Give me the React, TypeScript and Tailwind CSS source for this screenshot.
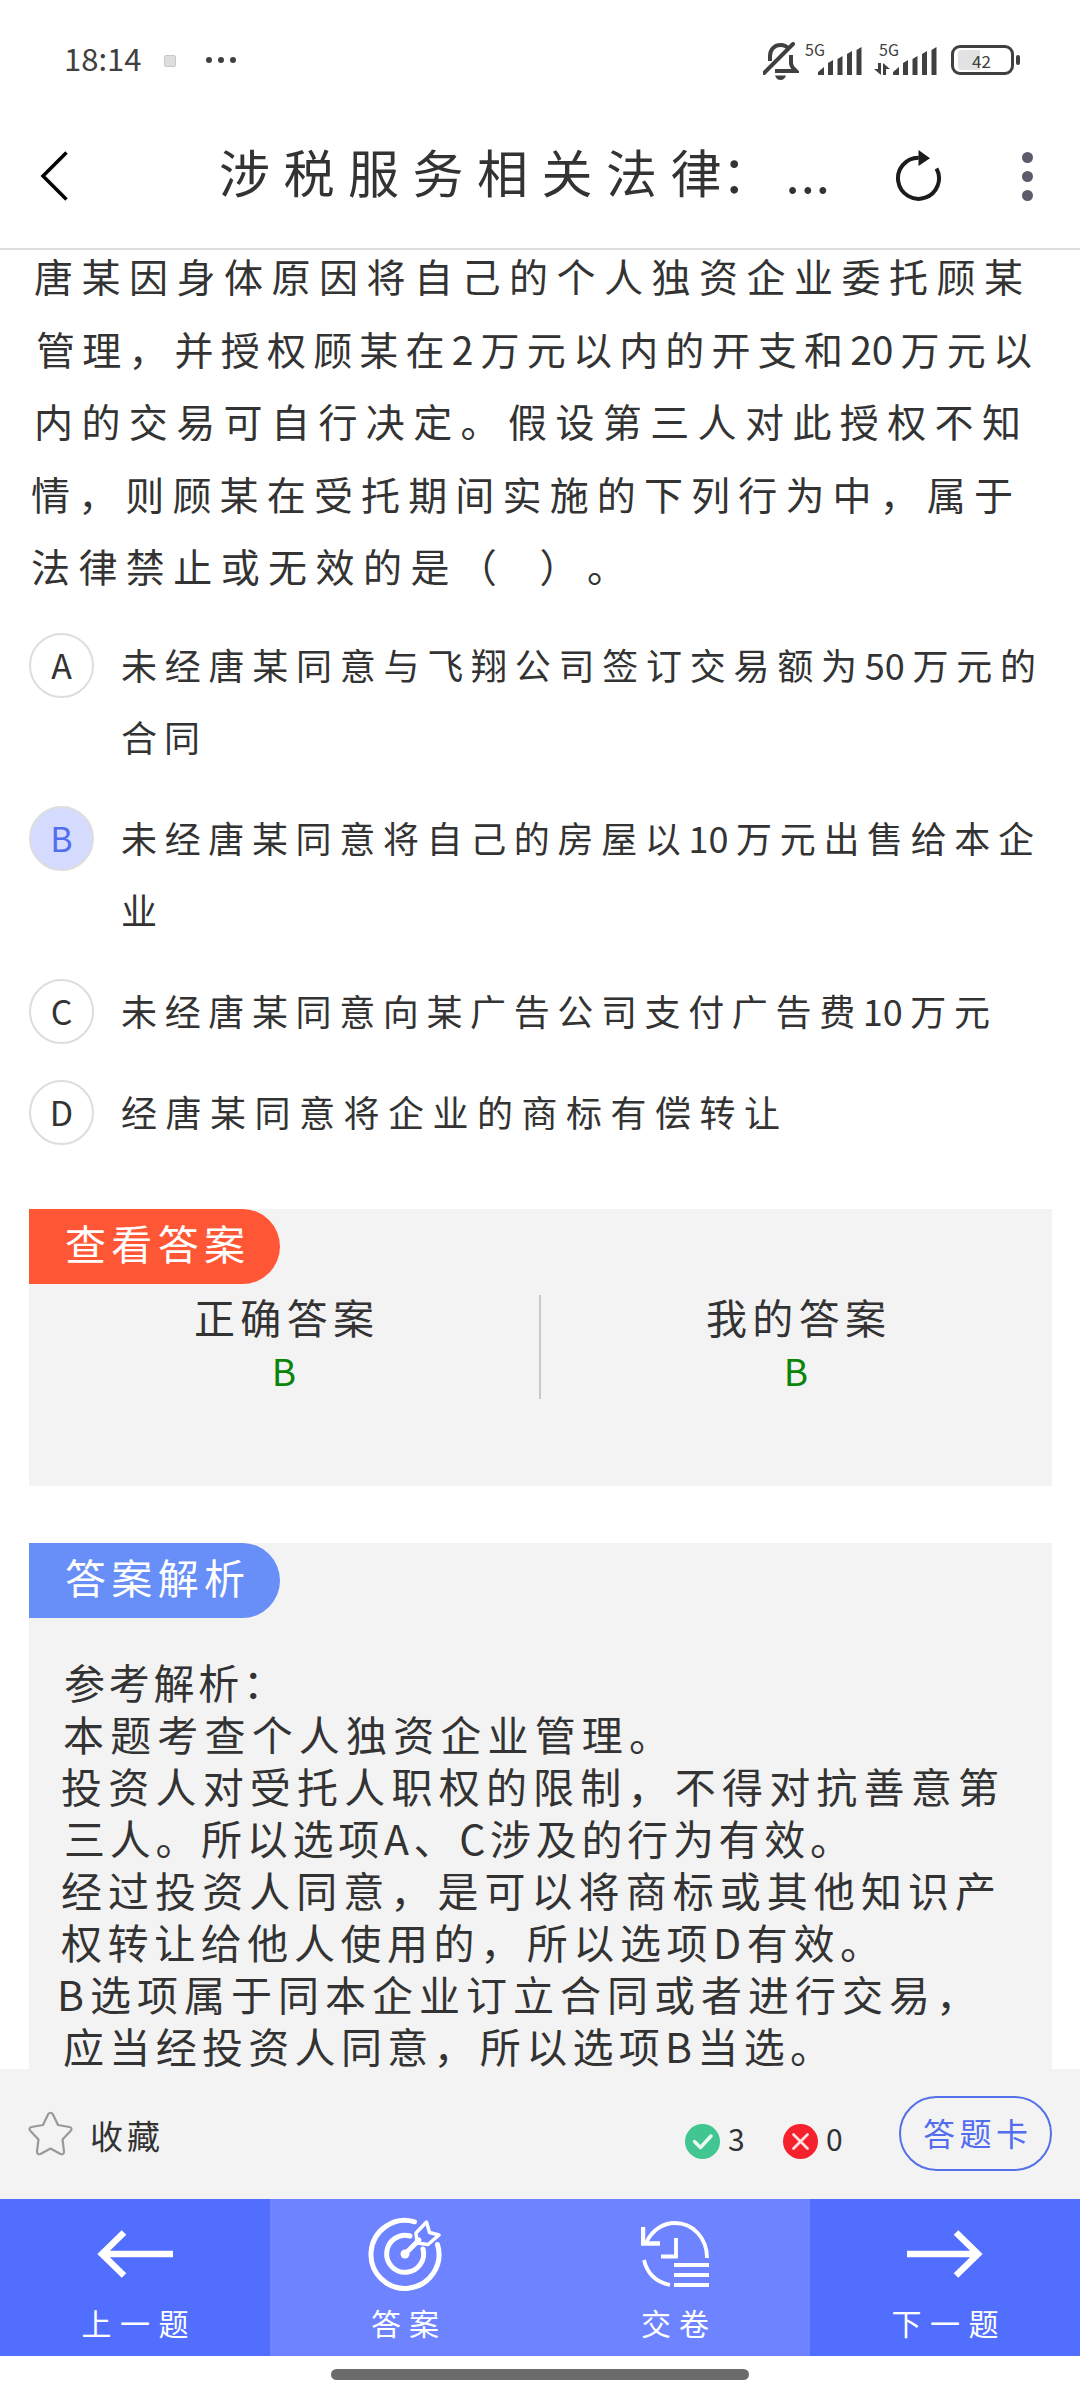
import type { ReactNode } from 'react'

type Row = { text: string; box: string }

const QUESTION: Row[] = [
  { text: '唐某因身体原因将自己的个人独资企业委托顾某', box: 'ml-[34px] w-[989px]' },
  { text: '管理，并授权顾某在2万元以内的开支和20万元以', box: 'ml-[36px] w-[996px]' },
  { text: '内的交易可自行决定。假设第三人对此授权不知', box: 'ml-[34px] w-[987px]' },
  { text: '情，则顾某在受托期间实施的下列行为中，属于', box: 'ml-[31px] w-[982px]' },
  { text: '法律禁止或无效的是（\u00a0\u00a0）。', box: 'ml-[31px] w-[595px]' },
]

const OPTIONS: { key: string; active?: boolean; rows: Row[] }[] = [
  {
    key: 'A',
    rows: [
      { text: '未经唐某同意与飞翔公司签订交易额为50万元的', box: 'w-[915px]' },
      { text: '合同', box: 'w-[79px]' },
    ],
  },
  {
    key: 'B',
    active: true,
    rows: [
      { text: '未经唐某同意将自己的房屋以10万元出售给本企', box: 'w-[913px]' },
      { text: '业', box: 'w-[37px]' },
    ],
  },
  { key: 'C', rows: [{ text: '未经唐某同意向某广告公司支付广告费10万元', box: 'w-[869px]' }] },
  { key: 'D', rows: [{ text: '经唐某同意将企业的商标有偿转让', box: 'w-[659px]' }] },
]

const ANALYSIS: Row[] = [
  { text: '参考解析：', box: 'ml-[35px] w-[220px]' },
  { text: '本题考查个人独资企业管理。', box: 'ml-[34px] w-[607px]' },
  { text: '投资人对受托人职权的限制，不得对抗善意第', box: 'ml-[32px] w-[938px]' },
  { text: '三人。所以选项A、C涉及的行为有效。', box: 'ml-[35px] w-[787px]' },
  { text: '经过投资人同意，是可以将商标或其他知识产', box: 'ml-[32px] w-[935px]' },
  { text: '权转让给他人使用的，所以选项D有效。', box: 'ml-[32px] w-[820px]' },
  { text: 'B选项属于同本企业订立合同或者进行交易，', box: 'ml-[28px] w-[920px]' },
  { text: '应当经投资人同意，所以选项B当选。', box: 'ml-[34px] w-[768px]' },
]

// one text line, glyphs spread evenly over the given width
function Line({ text, box }: Row) {
  return <div className={`whitespace-nowrap [text-align-last:justify] ${box}`}>{text}</div>
}

function Signal() {
  return (
    <svg width="44" height="28" viewBox="0 0 44 28" fill="#404040">
      <path d="M0 28v-3l6-5v8zM10 28V16l5-3v15zM19.500 28V12l5-3v19zM29 28V7l5-3v24zM38.500 28V3l5-3v28z" />
    </svg>
  )
}

function StatusBar() {
  return (
    <div className="flex h-[100px] items-start text-[#404040]">
      <div className="mt-[41px] ml-[64px] w-[70px] text-[31px] leading-[34px] [text-align-last:justify]">18:14</div>
      <div className="mt-[55px] ml-[30px] h-[12px] w-[12px] rounded-[2px] border border-[#c8c8c8] bg-[#dedede]" />
      <div className="mt-[57px] ml-[30px] flex gap-[6px]">
        <i className="h-[6px] w-[6px] rounded-full bg-[#404040]" />
        <i className="h-[6px] w-[6px] rounded-full bg-[#404040]" />
        <i className="h-[6px] w-[6px] rounded-full bg-[#404040]" />
      </div>
      <svg className="mt-[42px] ml-[527px]" width="36" height="38" viewBox="0 0 36 38" fill="none" stroke="#404040" strokeWidth="4">
        <path d="M7 19v-5c0-7 5-11 10.500-11 4 0 6.500 1.500 8.500 4M28 13v8c0 4 3 6 5 8H12" />
        <path d="M1 31 30 2" strokeLinecap="round" />
        <path d="M12 33.500h11c-1 3-3 4.500-5.500 4.500s-4.500-1.500-5.500-4.500z" fill="#404040" stroke="none" />
      </svg>
      <div className="mt-[41px] ml-[6px] flex w-[57px] items-start">
        <span className="-mr-[10px] w-[24px] text-[16px] leading-[16px]">5G</span>
        <div className="mt-[6px]"><Signal /></div>
      </div>
      <div className="mt-[41px] ml-[12px] flex w-[63px] items-start">
        <div className="w-[19px]">
          <div className="ml-[5px] text-[16px] leading-[16px]">5G</div>
          <svg className="mt-[6px]" width="16" height="12" viewBox="0 0 16 12" fill="#404040">
            <path d="M4 0h3v12L0 6h4zM9 12V0l7 6h-4v6z" />
          </svg>
        </div>
        <div className="mt-[6px]"><Signal /></div>
      </div>
      <div className="mt-[45px] ml-[14px] flex h-[30px] w-[63px] items-center rounded-[9px] border-[3px] border-[#404040] px-[4px]">
        <div className="h-[20px] w-[22px] rounded-l-[4px] bg-[#e2e2e2]" />
        <span className="-ml-[8px] text-[17px] leading-none">42</span>
      </div>
      <div className="mt-[55px] ml-[2px] h-[10px] w-[4px] rounded-full bg-[#404040]" />
    </div>
  )
}

function Header() {
  return (
    <header className="flex h-[150px] items-start border-b-2 border-[#ddd]">
      <svg className="mt-[51px] ml-[40px]" width="28" height="50" viewBox="0 0 28 50" fill="none" stroke="#000" strokeWidth="3.500">
        <path d="M26.500 1.500 3 25l23.500 23.500" />
      </svg>
      <h1 className="mt-[34px] ml-[151px] flex w-[612px] text-[51px] leading-[74px] text-[#333]">
        <span className="w-[505px] whitespace-nowrap [text-align-last:justify]">涉税服务相关法律</span>
        <span>：</span>
        <span className="ml-[13px] tracking-[1px]">...</span>
      </h1>
      <svg className="mt-[48px] ml-[64px]" width="48" height="54" viewBox="0 0 48 54">
        <path d="M41.500 20.500A20.500 20.500 0 1 1 23.700 9.800" fill="none" stroke="#1c1c1c" strokeWidth="4" />
        <path d="M23.500 2 35 10.300 23.500 18z" fill="#1c1c1c" />
      </svg>
      <div className="mt-[52px] ml-[79px] flex flex-col gap-[8px]">
        <i className="h-[11px] w-[11px] rounded-full bg-[#5c5b6b]" />
        <i className="h-[11px] w-[11px] rounded-full bg-[#5c5b6b]" />
        <i className="h-[11px] w-[11px] rounded-full bg-[#5c5b6b]" />
      </div>
    </header>
  )
}

function Badge({ color, children }: { color: string; children: ReactNode }) {
  return (
    <div className={`h-[75px] w-[251px] rounded-r-full pl-[36px] text-[41px] leading-[66px] text-white ${color}`}>
      <div className="w-[180px] [text-align-last:justify]">{children}</div>
    </div>
  )
}

function AnswerCol({ title }: { title: string }) {
  return (
    <div className="w-[180px] text-center">
      <div className="text-[41px] leading-[50px] [text-align-last:justify]">{title}</div>
      <div className="mt-[4px] text-[37px] leading-[50px] text-[#0a850a]">B</div>
    </div>
  )
}

function Tab({ label, box, dark, children }: { label: string; box: string; dark?: boolean; children: ReactNode }) {
  return (
    <button className={`flex flex-1 flex-col items-center text-white ${dark ? 'bg-[#526eff]' : 'bg-[#6d83ff]'}`}>
      <span className="mt-[15px] flex h-[80px] items-center">{children}</span>
      <span className={`mt-[10px] block text-[30px] leading-[36px] [text-align-last:justify] ${box}`}>{label}</span>
    </button>
  )
}

export default function App() {
  return (
    <div className="flex h-[2400px] w-[1080px] flex-col overflow-hidden bg-white font-['Noto_Sans_CJK_SC',sans-serif] font-normal text-[#333] [text-spacing-trim:space-all]">
      <StatusBar />
      <Header />

      <main className="h-[1819px] overflow-hidden">
        <div className="-mt-[11px] text-[39px] leading-[72.500px]">
          {QUESTION.map(r => <Line key={r.text} {...r} />)}
        </div>

        <div className="mt-[26px] ml-[29px] flex flex-col gap-[29px]">
          {OPTIONS.map(o => (
            <div key={o.key} className="flex items-start">
              <span className={`mt-[5px] flex h-[65px] w-[65px] items-center justify-center rounded-full border-2 border-[#ddd] text-[34px] leading-none ${o.active ? 'bg-[#d5dbff] text-[#526eee]' : ''}`}>
                {o.key}
              </span>
              <div className="ml-[27px] text-[36px] leading-[72px]">
                {o.rows.map(r => <Line key={r.text} {...r} />)}
              </div>
            </div>
          ))}
        </div>

        <section className="mt-[62px] ml-[29px] h-[277px] w-[1023px] bg-[#f3f3f3]">
          <Badge color="bg-[#ff5735]">查看答案</Badge>
          <div className="mt-[7px] flex">
            <div className="flex w-[510px] justify-center"><AnswerCol title="正确答案" /></div>
            <div className="mt-[4px] h-[104px] w-[1.500px] bg-[#c8c8c8]" />
            <div className="flex w-[511px] justify-center"><AnswerCol title="我的答案" /></div>
          </div>
        </section>

        <section className="mt-[57px] ml-[29px] h-[600px] w-[1023px] bg-[#f3f3f3]">
          <Badge color="bg-[#688ff8]">答案解析</Badge>
          <div className="mt-[37px] text-[41px] leading-[52px]">
            {ANALYSIS.map(r => <Line key={r.text} {...r} />)}
          </div>
        </section>
      </main>

      <div className="flex h-[130px] items-start bg-[#f3f3f3]">
        <svg className="mt-[42px] ml-[28px]" width="45" height="46" viewBox="0 0 45 46" fill="none" stroke="#999" strokeWidth="2.200" strokeLinejoin="round">
          <path d="M20 3.500q2.500-3.500 5 0l5 10.500 11.500 2q3.500 1 1 4l-8 8.500 1.500 12q0 3.500-3.500 2.500L22.500 37.500 12.500 43q-3.500 1-3.500-2.500l1.500-12-8-8.500q-2.500-3 1-4L15 14z" />
        </svg>
        <span className="mt-[46px] ml-[17px] w-[70px] text-[33px] leading-[40px] [text-align-last:justify]">收藏</span>
        <svg className="mt-[55px] ml-[525px]" width="35" height="35" viewBox="0 0 35 35" fill="none" stroke="#eafaf3" strokeWidth="3.500" strokeLinecap="round" strokeLinejoin="round">
          <circle cx="17.500" cy="17.500" r="17.500" fill="#41c591" stroke="none" />
          <path d="m9.500 17.500 6 6L26 12" />
        </svg>
        <span className="mt-[50px] ml-[8px] w-[18px] text-[30px] leading-[38px]">3</span>
        <svg className="mt-[55px] ml-[37px]" width="35" height="35" viewBox="0 0 35 35" fill="none" stroke="#ffdfe2" strokeWidth="2.800" strokeLinecap="round">
          <circle cx="17.500" cy="17.500" r="17.500" fill="#f5222d" stroke="none" />
          <path d="m10.500 10.500 14 14M24.500 10.500l-14 14" />
        </svg>
        <span className="mt-[50px] ml-[8px] w-[18px] text-[30px] leading-[38px]">0</span>
        <button className="mt-[27px] ml-[55px] h-[75px] w-[153px] rounded-full border-2 border-[#5470e8] px-[22px] pb-[4px] text-[32px] leading-[64px] text-[#526eee] [text-align-last:justify]">
          答题卡
        </button>
      </div>

      <nav className="flex h-[157px]">
        <Tab label="上一题" box="w-[107px]" dark>
          <svg width="76" height="48" viewBox="0 0 76 48" fill="none" stroke="#fff" strokeWidth="6.500">
            <path d="M76 24H5M27 2.500 5 24l22 21.500" />
          </svg>
        </Tab>
        <Tab label="答案" box="w-[68px]">
          <svg width="74" height="74" viewBox="0 0 74 74" fill="none" stroke="#fff" strokeWidth="5" strokeLinecap="round" strokeLinejoin="round">
            <path d="M46.500 4.800A34 34 0 1 0 69.500 27.500" />
            <path d="M42 19A18.500 18.500 0 1 0 55 32" />
            <path d="M37 37 51 23" />
            <circle cx="37" cy="37" r="4.500" fill="#fff" stroke="none" />
            <path d="m48 16 10.500-11 3 10.500L71 18 60 27.500l-11-1.500z" strokeWidth="3.500" />
          </svg>
        </Tab>
        <Tab label="交卷" box="w-[68px]">
          <svg width="68" height="66" viewBox="0 0 68 66" fill="none" stroke="#fff" strokeWidth="3.800">
            <path d="M5 22C11 9 22 2 34 2c18 0 32 15 32 35M3 39c3 13 12 22 26 25M35 17v18.500H20" />
            <path d="M2 6v16.500h17" strokeWidth="4.500" />
            <path d="M33 44h35M33 54h35M33 64h35" strokeWidth="4" />
          </svg>
        </Tab>
        <Tab label="下一题" box="w-[107px]" dark>
          <svg width="76" height="48" viewBox="0 0 76 48" fill="none" stroke="#fff" strokeWidth="6.500">
            <path d="M0 24h71M49 2.500 71 24 49 45.500" />
          </svg>
        </Tab>
      </nav>

      <div className="mt-[13px] ml-[331px] h-[11px] w-[418px] rounded-full bg-[#6b6b6b]" />
    </div>
  )
}
